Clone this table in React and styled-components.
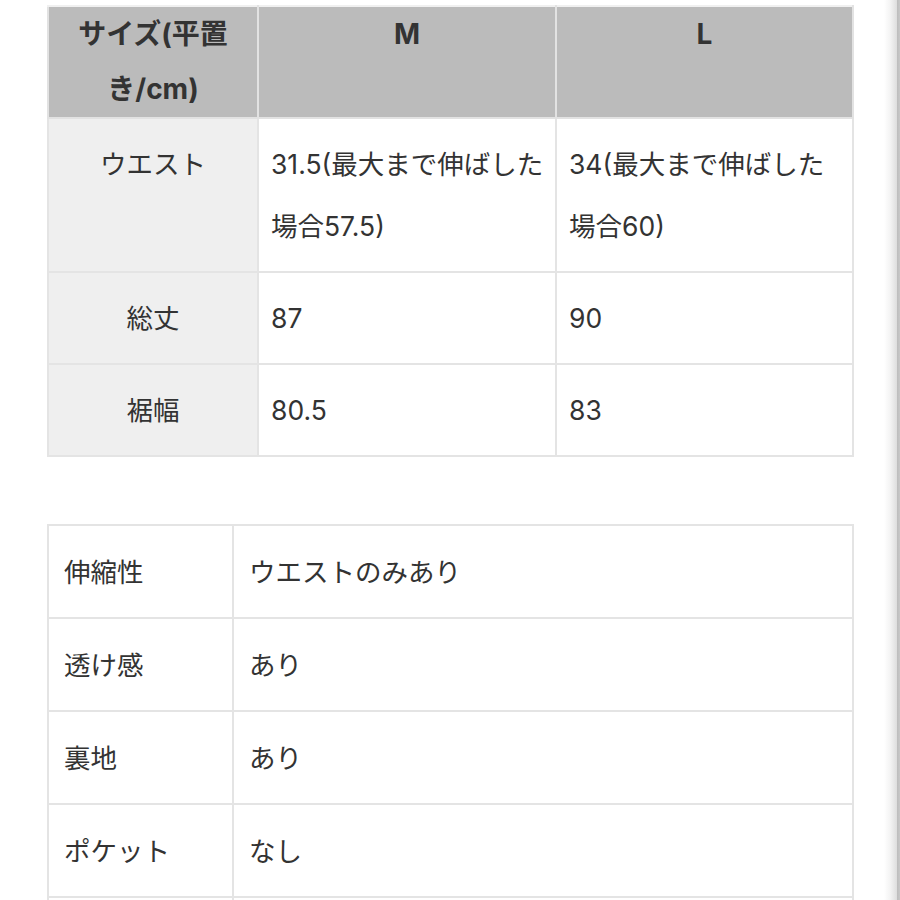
import React from "react";
import styled, { createGlobalStyle } from "styled-components";

const Global = createGlobalStyle`
  html, body { margin: 0; padding: 0; background: #ffffff; overflow: hidden; }
  body { font-family: "Inter", "Noto Sans CJK JP", sans-serif; color: #333333; }
`;

const Page = styled.div`
  display: flex;
  width: 900px;
  height: 900px;
  overflow: hidden;
`;

const Main = styled.main`
  flex: 1;
  padding: 5px 0 0 47px;
  display: flex;
  flex-direction: column;
  gap: 67px;
`;

const Edge = styled.div`
  width: 16px;
  flex: none;
  background: linear-gradient(to right, #ffffff 0%, #f3f3f3 40%, #dedede 80%, #bdbdbd 82%, #c8c8c8 100%);
`;

const Table = styled.table`
  width: 805px;
  border-collapse: collapse;
  table-layout: fixed;
  font-size: 26.5px;
  color: #333333;
`;

const HeadCell = styled.th`
  background: #bbbbbb;
  border: 2px solid #e2e2e2;
  border-top-color: #f0f0f0;
  font-size: 28px;
  font-weight: 700;
  line-height: 55px;
  padding: 0 4px;
  text-align: center;
  vertical-align: top;
  height: 111px;
  box-sizing: border-box;
  white-space: nowrap;
`;

const LabelCell = styled.td`
  background: ${(p) => (p.$shaded ? "#efefef" : "#ffffff")};
  border: 2px solid #e4e4e4;
  line-height: 62px;
  padding: ${(p) => (p.$tall ? "15px" : "14px")} ${(p) => (p.$shaded ? "8px" : "15px")} 14px;
  text-align: ${(p) => (p.$shaded ? "center" : "left")};
  vertical-align: top;
  font-weight: 400;
  white-space: nowrap;
`;

const ValueCell = styled.td`
  background: #ffffff;
  border: 2px solid #e4e4e4;
  line-height: 62px;
  padding: ${(p) => (p.$tall ? "15px" : "14px")} ${(p) => p.$pad || "12px"} 14px;
  text-align: left;
  vertical-align: top;
  white-space: nowrap;
  overflow: hidden;
`;

const sizeRows = [
  { label: "ウエスト", m: ["31.5(最大まで伸ばした", "場合57.5)"], l: ["34(最大まで伸ばした", "場合60)"] },
  { label: "総丈", m: ["87"], l: ["90"] },
  { label: "裾幅", m: ["80.5"], l: ["83"] },
];

const detailRows = [
  { label: "伸縮性", value: "ウエストのみあり" },
  { label: "透け感", value: "あり" },
  { label: "裏地", value: "あり" },
  { label: "ポケット", value: "なし" },
  { label: "\u00a0", value: "\u00a0" },
];

const Lines = ({ lines }) =>
  lines.map((t, i) => (
    <React.Fragment key={i}>
      {i > 0 && <br />}
      {t}
    </React.Fragment>
  ));

export default function App() {
  return (
    <>
      <Global />
      <Page>
        <Main>
          <Table>
            <colgroup>
              <col style={{ width: 210 }} />
              <col style={{ width: 298 }} />
              <col style={{ width: 297 }} />
            </colgroup>
            <thead>
              <tr>
                <HeadCell>
                  サイズ(平置<br />き/cm)
                </HeadCell>
                <HeadCell>M</HeadCell>
                <HeadCell>L</HeadCell>
              </tr>
            </thead>
            <tbody>
              {sizeRows.map((r) => (
                <tr key={r.label}>
                  <LabelCell $shaded>{r.label}</LabelCell>
                  <ValueCell>
                    <Lines lines={r.m} />
                  </ValueCell>
                  <ValueCell>
                    <Lines lines={r.l} />
                  </ValueCell>
                </tr>
              ))}
            </tbody>
          </Table>

          <Table>
            <colgroup>
              <col style={{ width: 185 }} />
              <col style={{ width: 620 }} />
            </colgroup>
            <tbody>
              {detailRows.map((r, i) => (
                <tr key={i}>
                  <LabelCell $tall>{r.label}</LabelCell>
                  <ValueCell $tall $pad="15px">{r.value}</ValueCell>
                </tr>
              ))}
            </tbody>
          </Table>
        </Main>
        <Edge />
      </Page>
    </>
  );
}
